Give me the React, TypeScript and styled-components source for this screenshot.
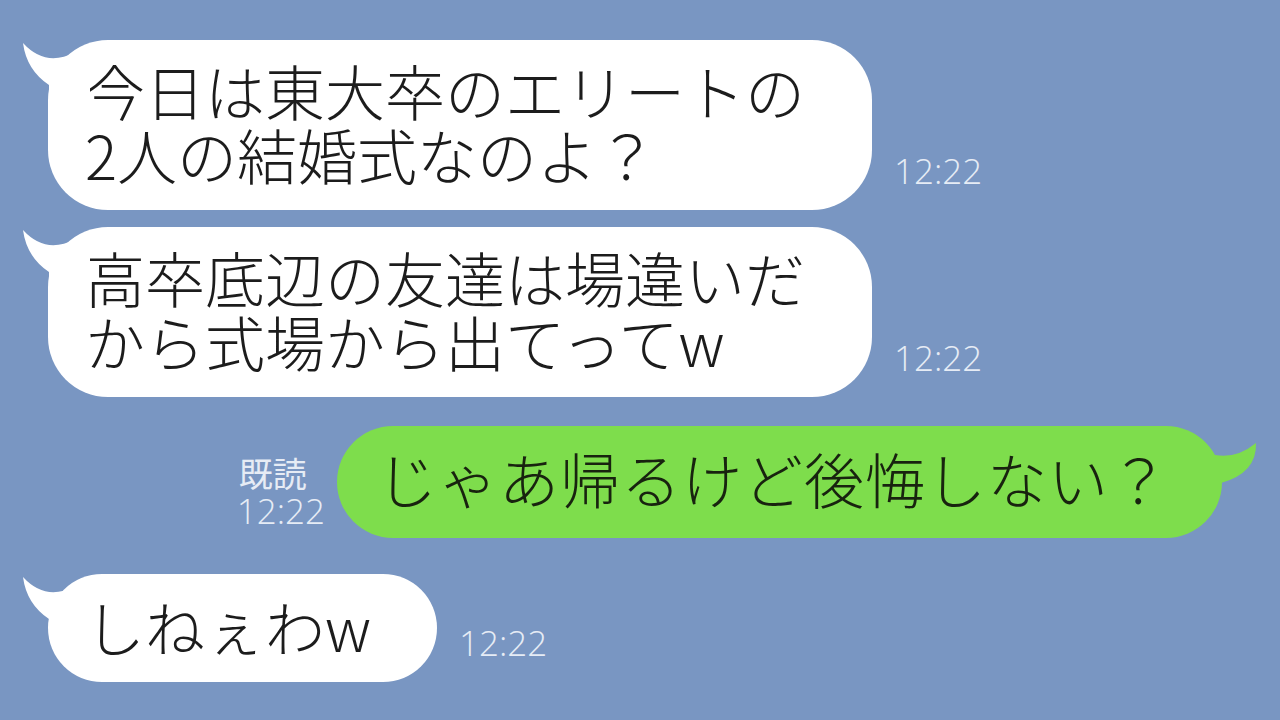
import React from "react";
import styled, { createGlobalStyle, css } from "styled-components";

const GlobalStyle = createGlobalStyle`
  html, body {
    margin: 0;
    padding: 0;
    background: #7996c2;
  }
  body {
    width: 1280px;
    height: 720px;
    overflow: hidden;
    font-family: "Noto Sans CJK JP", "Noto Sans", sans-serif;
  }
`;

const Page = styled.div`
  width: 1280px;
  height: 720px;
  box-sizing: border-box;
  padding: 40px 58px 0 48px;
  display: flex;
  flex-direction: column;
  background: #7996c2;
`;

const Row = styled.div<{ $side: "left" | "right"; $gap: number }>`
  display: flex;
  align-items: flex-end;
  justify-content: ${(p) => (p.$side === "left" ? "flex-start" : "flex-end")};
  margin-top: ${(p) => p.$gap}px;
`;

const Bubble = styled.div<{ $tone: "white" | "green"; $lines: number }>`
  position: relative;
  border-radius: 60px;
  font-family: "Noto Sans CJK JP", sans-serif;
  font-weight: 300;
  font-size: 60px;
  line-height: 64px;
  white-space: nowrap;
  color: #1c1c1c;
  ${(p) =>
    p.$tone === "white"
      ? css`
          background: #ffffff;
          padding: ${p.$lines > 1 ? "18px 67px 24px 37px" : "20px 66px 24px 37px"};
        `
      : css`
          background: #7edd4c;
          color: #18230f;
          letter-spacing: 1px;
          padding: 20px 52px 28px 40px;
        `}
`;

const TailSvg = styled.svg<{ $side: "left" | "right" }>`
  position: absolute;
  top: 0;
  width: 80px;
  height: 80px;
  overflow: visible;
  ${(p) => (p.$side === "left" ? css`left: -30px;` : css`right: -40px;`)}
`;

const Time = styled.div<{ $bottom: number }>`
  font-family: "Open Sans", "Noto Sans", sans-serif;
  font-weight: 300;
  font-size: 35px;
  line-height: 34px;
  color: #e6ecf5;
  margin: 0 0 ${(p) => p.$bottom}px 22px;
  white-space: nowrap;
`;

const ReadBlock = styled.div`
  display: flex;
  flex-direction: column;
  align-items: flex-start;
  margin: 0 12px 8px 0;
  color: #e6ecf5;
`;

const ReadLabel = styled.div`
  font-family: "Noto Sans CJK JP", sans-serif;
  font-size: 34px;
  line-height: 39px;
  padding-left: 2px;
`;

const ReadTime = styled.div`
  font-family: "Open Sans", "Noto Sans", sans-serif;
  font-weight: 300;
  font-size: 35px;
  line-height: 38px;
`;

const LeftTail = () => (
  <TailSvg $side="left" viewBox="0 0 80 80">
    <path
      d="M5 3 Q28 28 57 12 L72 12 L72 60 L31 60 L31 45 Q8.5 30 5 3 Z"
      fill="#ffffff"
    />
  </TailSvg>
);

const RightTail = () => (
  <TailSvg $side="right" viewBox="0 0 80 80">
    <path
      d="M74 17 Q54.5 33 33 29 L20 29 L20 70 L38 70 L39 57 Q75 47 74 17 Z"
      fill="#7edd4c"
    />
  </TailSvg>
);

type Msg = { side: "left" | "right"; lines: string[]; time: string; gap: number };

const messages: Msg[] = [
  { side: "left", lines: ["今日は東大卒のエリートの", "2人の結婚式なのよ？"], time: "12:22", gap: 0 },
  { side: "left", lines: ["高卒底辺の友達は場違いだ", "から式場から出てってw"], time: "12:22", gap: 17 },
  { side: "right", lines: ["じゃあ帰るけど後悔しない？"], time: "12:22", gap: 29 },
  { side: "left", lines: ["しねぇわw"], time: "12:22", gap: 36 },
];

export default function App() {
  return (
    <>
      <GlobalStyle />
      <Page>
        {messages.map((m, i) =>
          m.side === "left" ? (
            <Row key={i} $side="left" $gap={m.gap}>
              <Bubble $tone="white" $lines={m.lines.length}>
                <LeftTail />
                {m.lines.map((l, j) => (
                  <React.Fragment key={j}>
                    {j > 0 && <br />}
                    {l}
                  </React.Fragment>
                ))}
              </Bubble>
              <Time $bottom={22}>{m.time}</Time>
            </Row>
          ) : (
            <Row key={i} $side="right" $gap={m.gap}>
              <ReadBlock>
                <ReadLabel>既読</ReadLabel>
                <ReadTime>{m.time}</ReadTime>
              </ReadBlock>
              <Bubble $tone="green" $lines={1}>
                <RightTail />
                {m.lines[0]}
              </Bubble>
            </Row>
          )
        )}
      </Page>
    </>
  );
}
